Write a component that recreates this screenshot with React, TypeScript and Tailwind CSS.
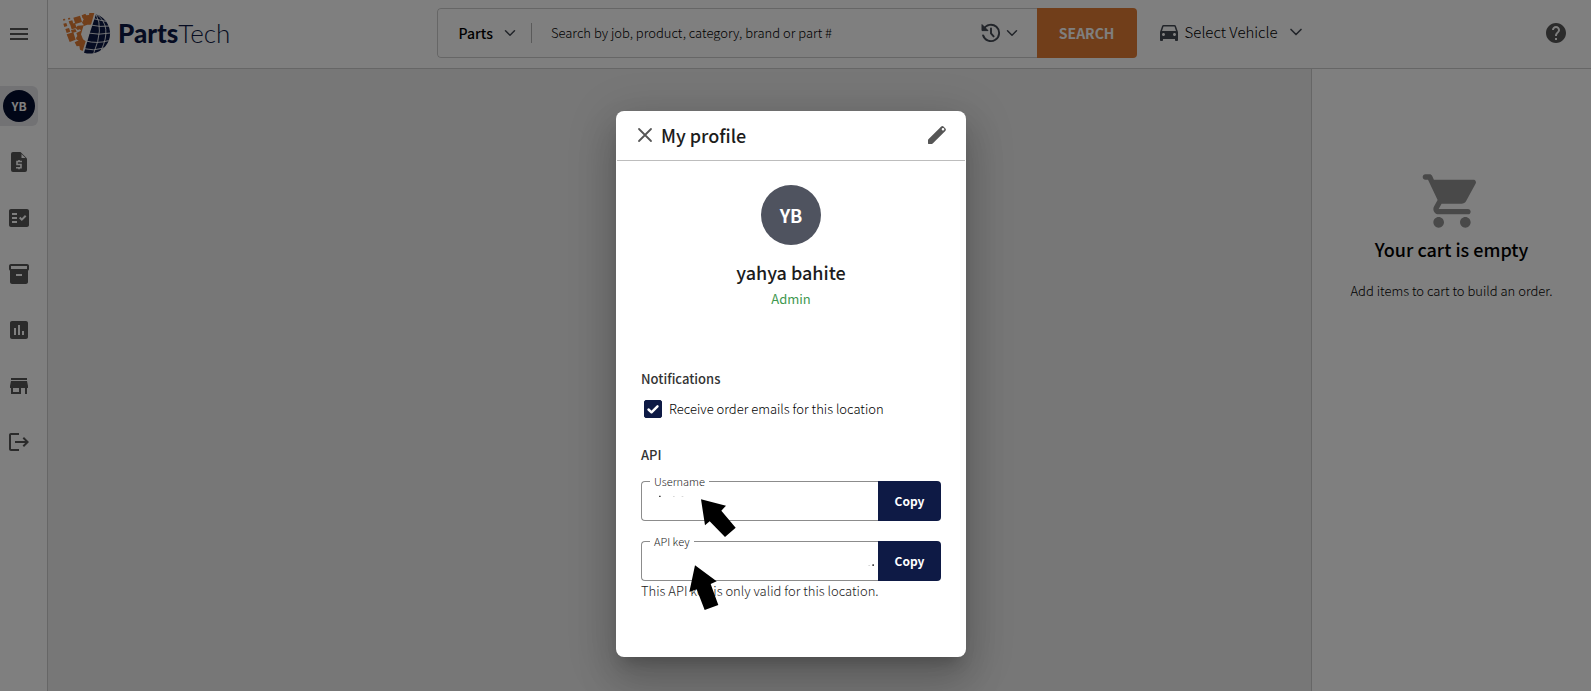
import type { ReactNode } from 'react';
import { ChevronDown } from 'lucide-react';
import {
  MdAssessment,
  MdDirectionsCar,
  MdFactCheck,
  MdHelp,
  MdInventory2,
  MdLogout,
  MdMenu,
  MdStore,
} from 'react-icons/md';

function GlobeMark() {
  return (
    <svg viewBox="186 36 147 126" className="h-[42px] w-[49px] shrink-0" aria-hidden="true">
      <g fill="#e27c34">
        <path d="M283 39 L268 39 L267 45 L259 46 L256 41 L245 46 L247 53 L251 58 L246 68 L252 76 L233 77 L227 84 L233 90 L240 88 L243 92 L229 99 L232 108 L228 114 L230 119 L236 121 L224 127 L230 139 L238 138 L240 149 L248 153 L257 124 L249 118 L243 103 L250 79 L262 74 L273 74 Z" />
        <path d="M220 53l20-6 6 19-20 6z" />
        <path d="M210 72l15-3 5 15-15 4z" />
        <path d="M200 103l20-6 7 22-18 7z" />
        <path d="M213 90l13-3 4 8-14 4z" />
        <path d="M206 64l11-3 3 10-11 2z" />
        <path d="M190 71l9-2 3 9-9 3z" />
        <path d="M196 87l11-3 4 11-11 4z" />
        <path d="M189 57l6-1 1 5-6 1z" />
        <path d="M204 54l6-1 1 5-6 1z" />
      </g>
      <path d="M288 43A59 59 0 0 1 252 158Q268 100 288 43Z" fill="#0d1944" />
      <g fill="none" stroke="#ffffff" strokeWidth="2.6">
        <path d="M288 43Q312 85 281 160" />
        <path d="M290 43Q338 78 303 152" />
        <path d="M281 56Q300 61 318 64" />
        <path d="M272 75Q300 82 329 78" />
        <path d="M264 99Q296 106 332 99" />
        <path d="M258 123Q290 132 326 122" />
        <path d="M252 146Q280 154 312 144" />
      </g>
    </svg>
  );
}

function HistoryIcon() {
  return (
    <svg viewBox="0 0 20 20" className="size-5" fill="none" aria-hidden="true">
      <path
        d="M2.6 6.2A8.2 8.2 0 1 1 2.1 12.4M10 5.4V10.4L12.6 13.4"
        stroke="#454b55"
        strokeWidth="1.9"
        strokeLinecap="round"
        strokeLinejoin="round"
      />
      <path d="M1 1.6V7.6H7Z" fill="#454b55" stroke="#454b55" strokeLinejoin="round" />
    </svg>
  );
}

function QuoteIcon() {
  return (
    <svg viewBox="0 0 24 24" className="size-6" fill="none" aria-hidden="true">
      <path d="M6 2h7.500L20 8.500V20a2 2 0 0 1-2 2H6a2 2 0 0 1-2-2V4a2 2 0 0 1 2-2z" fill="currentColor" />
      <path d="M14.500 4v4h4z" fill="#ffffff" />
      <path d="M15 11.500h-5v3h4v3.200H9M12 10v1.500M12 17.700v1.500" stroke="#ffffff" strokeWidth="1.600" />
    </svg>
  );
}

function CartIcon() {
  return (
    <svg viewBox="0 0 24 24" className="size-16 text-[#939393]" fill="currentColor" aria-hidden="true">
      <path d="M7 18c-1.1 0-1.99.9-1.99 2S5.9 22 7 22s2-.9 2-2-.9-2-2-2zM1 3c0 .55.45 1 1 1h1l3.6 7.59-1.35 2.44C4.52 15.37 5.48 17 7 17h11c.55 0 1-.45 1-1s-.45-1-1-1H7l1.1-2h7.45c.75 0 1.41-.41 1.75-1.03l3.58-6.49c.37-.66-.11-1.48-.87-1.48H5.21l-.67-1.43c-.16-.35-.52-.57-.9-.57H2c-.55 0-1 .45-1 1zm16 15c-1.1 0-1.99.9-1.99 2s.89 2 1.99 2 2-.9 2-2-.9-2-2-2z" />
    </svg>
  );
}

function SideButton({ label, children }: { label: string; children: ReactNode }) {
  return (
    <button aria-label={label} className="flex h-10 w-full items-center justify-center text-[#565656]">
      {children}
    </button>
  );
}

function Sidebar() {
  return (
    <nav className="w-12 shrink-0 border-r border-[#cccccc] bg-white pt-[14px]">
      <div className="flex w-[38px] flex-col gap-4">
        <SideButton label="Menu">
          <MdMenu className="size-6" />
        </SideButton>
        <button
          aria-label="My profile"
          className="mt-4 flex h-10 items-center justify-center rounded-r-md bg-[#e5e5e9]"
        >
          <span className="flex size-8 items-center justify-center rounded-full bg-[#030d2e] text-[12px] leading-4 font-bold text-white">
            YB
          </span>
        </button>
        <SideButton label="Quotes">
          <QuoteIcon />
        </SideButton>
        <SideButton label="Orders">
          <MdFactCheck className="size-6" />
        </SideButton>
        <SideButton label="Inventory">
          <MdInventory2 className="size-6" />
        </SideButton>
        <SideButton label="Reports">
          <MdAssessment className="size-6" />
        </SideButton>
        <SideButton label="Store">
          <MdStore className="size-6" />
        </SideButton>
        <SideButton label="Log out">
          <MdLogout className="size-6" />
        </SideButton>
      </div>
    </nav>
  );
}

function Header() {
  return (
    <header className="flex h-[69px] shrink-0 items-center border-b border-[#cccccc] bg-white pr-[23px] pb-[3px] pl-[14px]">
      <a href="#home" aria-label="PartsTech" className="flex items-center gap-[7px]">
        <GlobeMark />
        <span className="font-[Lato] text-[26px] leading-8 text-[#0d1944]">
          <b className="font-black">Parts</b>
          <span className="font-light">Tech</span>
        </span>
      </a>
      <div className="mx-auto flex min-w-0 items-center pr-8">
        <form
          className="flex h-[50px] w-[700px] min-w-0 overflow-hidden rounded-[4px]"
          onSubmit={(e) => e.preventDefault()}
        >
          <div className="flex min-w-0 flex-1 items-center rounded-l-[4px] border border-r-0 border-[#cccccc] pr-4 pl-[21px]">
            <button
              type="button"
              className="flex items-center gap-2 text-[14px] leading-5 font-medium text-black"
            >
              Parts
              <ChevronDown className="size-[18px] text-[#454b55]" />
            </button>
            <span className="mx-3 h-5 w-px bg-[#b4b4b4]" />
            <input
              aria-label="Search"
              placeholder="Search by job, product, category, brand or part #"
              className="ml-[7px] min-w-0 flex-1 text-[13px] leading-5 font-light outline-none placeholder:text-black"
            />
            <button type="button" aria-label="Search history" className="flex items-center gap-0.5 text-[#454b55]">
              <HistoryIcon />
              <ChevronDown className="size-[18px]" />
            </button>
          </div>
          <button className="w-[100px] bg-[#e27c34] text-[14px] leading-5 font-bold text-white">
            SEARCH
          </button>
        </form>
        <button className="ml-5 flex items-center gap-1 pb-0.5 text-[15px] leading-5 font-light whitespace-nowrap text-black">
          <MdDirectionsCar className="size-6 text-[#454b55]" />
          Select Vehicle
          <ChevronDown className="ml-1 size-5 text-[#454b55]" />
        </button>
      </div>
      <button aria-label="Help" className="text-[#565656]">
        <MdHelp className="size-6" />
      </button>
    </header>
  );
}

function CopyField({ id, label }: { id: string; label: string }) {
  return (
    <div className="relative flex h-10">
      <input
        id={id}
        readOnly
        className="min-w-0 flex-1 rounded-l-[4px] border border-r-0 border-[#8c8c8c] px-3 text-[13px] outline-none"
      />
      <label
        htmlFor={id}
        className="absolute -top-2 left-[9px] bg-white px-1 text-[11px] leading-4 font-light text-[#222222]"
      >
        {label}
      </label>
      <button className="w-[63px] rounded-r-[4px] bg-[#0e1a45] text-[12px] leading-5 font-bold text-white">
        Copy
      </button>
    </div>
  );
}

function ProfileDialog() {
  return (
    <section
      role="dialog"
      aria-label="My profile"
      className="relative w-[350px] rounded-[8px] bg-white pb-14 shadow-[0_11px_15px_-7px_rgba(0,0,0,0.2),0_24px_38px_3px_rgba(0,0,0,0.14),0_9px_46px_8px_rgba(0,0,0,0.12)]"
    >
      <header className="mx-px flex h-[50px] items-center border-b border-[#bdbdbd] px-4 pb-0.5">
        <button aria-label="Close">
          <svg viewBox="0 0 24 24" className="size-6" fill="none" stroke="#565656" strokeWidth="1.8" strokeLinecap="round">
            <path d="M6 6l12 12M18 6l-12 12" />
          </svg>
        </button>
        <h1 className="ml-1 flex-1 text-[18px] leading-6 font-medium text-[#1c1c1c]">My profile</h1>
        <button aria-label="Edit profile">
          <svg viewBox="0 0 24 24" className="size-6" fill="#565656" fillRule="evenodd">
            <path d="M3 20.5V17.2c0-.4.1-.6.4-.9L16 3.7c.8-.8 1.8-.8 2.5-.1l1.9 1.9c.7.7.7 1.7-.1 2.5L7.700 20.6c-.3.3-.5.4-.9.4H3.500c-.3 0-.5-.2-.5-.5zM18 4.900a1.300 1.300 0 1 0 0 2.600a1.300 1.300 0 1 0 0-2.600z" />
          </svg>
        </button>
      </header>
      <div className="px-[25px] pt-6">
        <div className="mx-auto flex size-[60px] items-center justify-center rounded-full bg-[#4f535f] text-[18px] leading-6 font-bold text-white">
          YB
        </div>
        <h2 className="mt-[15px] text-center text-[18px] leading-6 font-medium text-[#1c1c1c]">yahya bahite</h2>
        <p className="mt-[5px] text-center text-[13px] leading-5 text-[#3f9950]">Admin</p>

        <h3 className="mt-[60px] text-[13px] leading-5 font-medium text-[#333333]">Notifications</h3>
        <label className="mt-2.5 flex items-center gap-[7px] pl-[3px] text-[13px] leading-5 font-light text-black">
          <span className="relative size-[18px]">
            <input
              type="checkbox"
              defaultChecked
              className="peer block size-[18px] appearance-none rounded-[2px] border border-[#0e1a45] checked:bg-[#0e1a45]"
            />
            <svg
              viewBox="0 0 18 18"
              className="pointer-events-none absolute inset-0 hidden size-[18px] peer-checked:block"
              fill="none"
              stroke="#ffffff"
              strokeWidth="2.4"
              strokeLinecap="round"
              strokeLinejoin="round"
            >
              <path d="M4.500 9.500L7.500 12.300L13.500 6.300" />
            </svg>
          </span>
          Receive order emails for this location
        </label>

        <h3 className="mt-[26px] text-[13px] leading-5 font-medium text-[#333333]">API</h3>
        <div className="mt-4 flex flex-col gap-5">
          <CopyField id="api-username" label="Username" />
          <CopyField id="api-key" label="API key" />
        </div>
        <p className="text-[13px] leading-5 font-light text-[#222222]">
          This API key is only valid for this location.
        </p>
      </div>
      <svg
        viewBox="48 -1047 1050 1641"
        className="pointer-events-none absolute top-0 left-0 h-[547px] w-[350px]"
        aria-hidden="true"
      >
        <path d="M303 118L378 137L364 152L407 203L375 231L329 184L315 196Z" />
        <path d="M285 316L350 364L332 372L355 435L314 450L290 388L268 396Z" />
        <path d="M177 107h5v4h-5zM817 313h5v5h-5z" fill="#444444" />
        <path d="M219 108h5v2h-5zM245 108h5v2h-5zM805 315h5v2h-5z" fill="#cccccc" />
      </svg>
    </section>
  );
}

export default function App() {
  return (
    <div className="relative flex min-h-screen font-['Noto_Sans_CJK_SC',sans-serif]">
      <Sidebar />
      <div className="flex min-w-0 flex-1 flex-col">
        <Header />
        <div className="flex flex-1">
          <main className="flex-1 bg-[#eeeeee]" />
          <aside className="flex w-[280px] flex-col items-center border-l border-[#cccccc] bg-white pt-[100px]">
            <CartIcon />
            <h2 className="mt-1 text-[18px] leading-6 font-medium text-black">Your cart is empty</h2>
            <p className="mt-5 text-[13px] leading-5 font-light text-black">
              Add items to cart to build an order.
            </p>
          </aside>
        </div>
      </div>
      <div className="absolute inset-0 flex items-start justify-center overflow-hidden bg-black/50 pt-[111px] pr-[9px]">
        <ProfileDialog />
      </div>
    </div>
  );
}
